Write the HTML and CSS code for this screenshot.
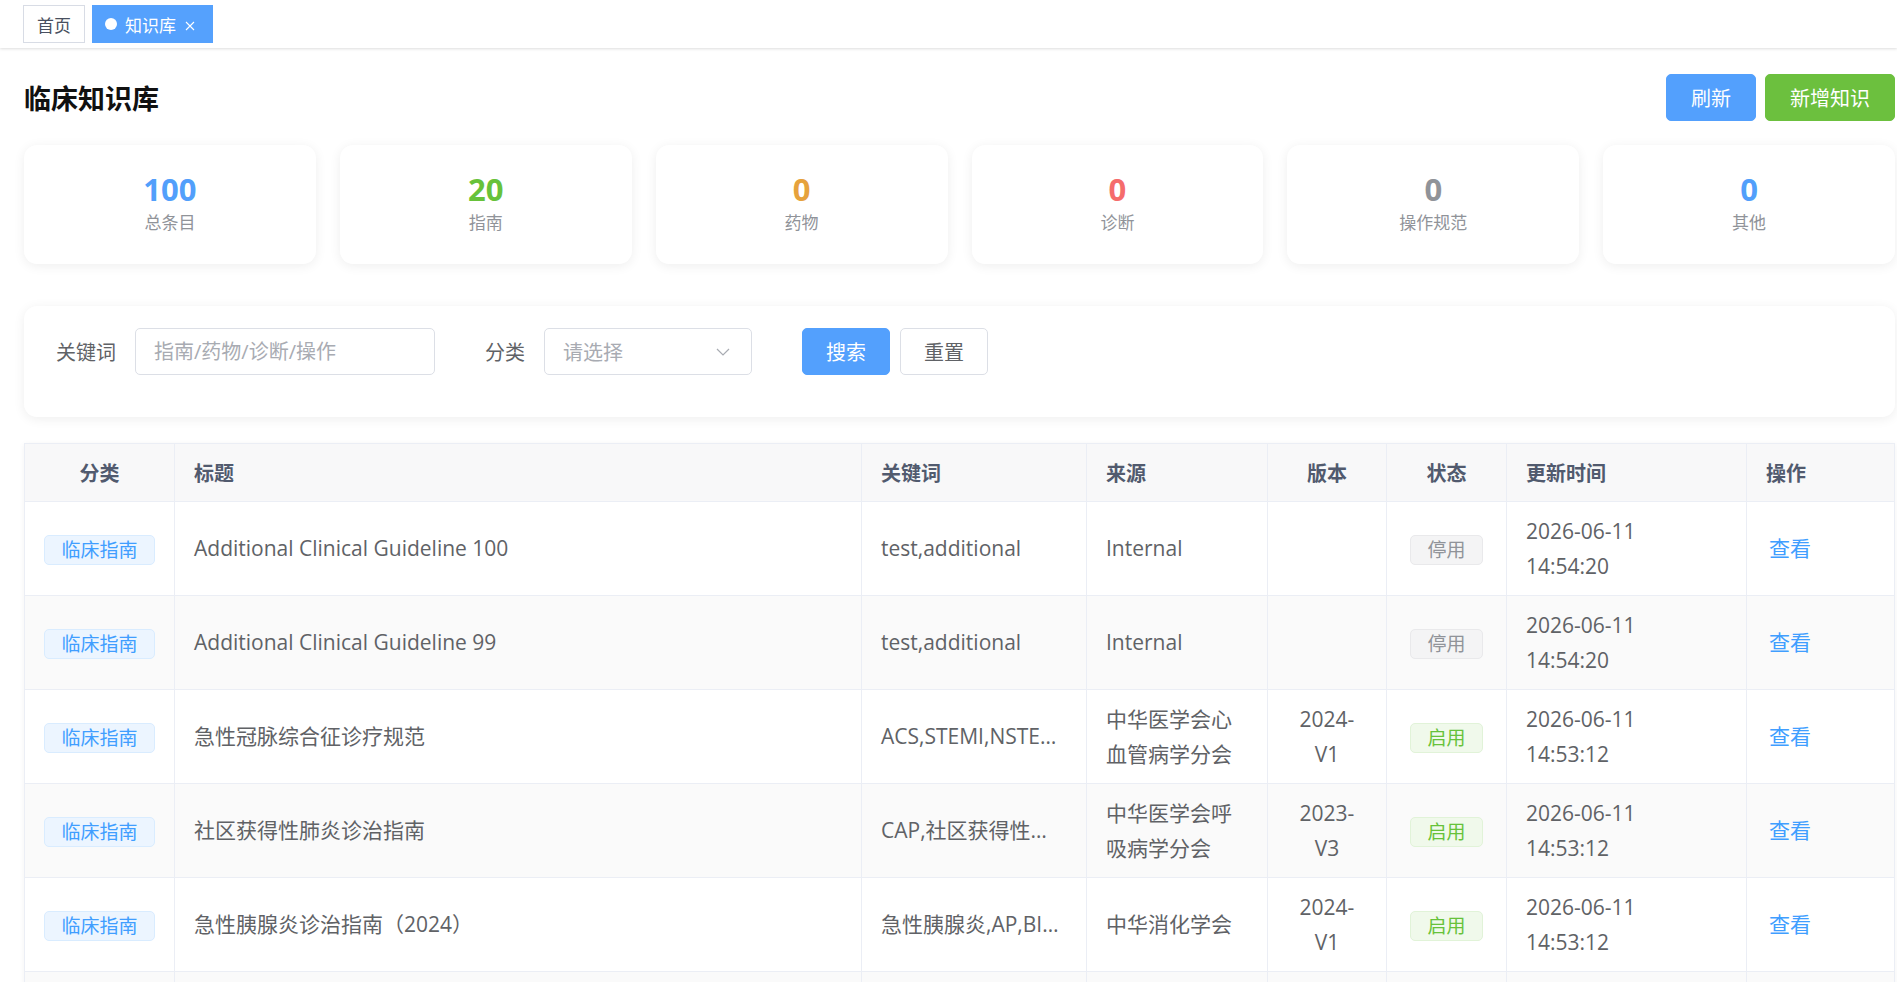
FILE: index.html
```html
<!DOCTYPE html>
<html lang="zh-CN">
<head>
    <meta charset="UTF-8">
    <meta name="viewport" content="width=device-width, initial-scale=1.0">
    <title>临床知识库</title>
    <link rel="stylesheet" href="styles.css">
</head>
<body>

<div class="tags-view">
    <span class="tags-item">首页</span>
    <span class="tags-item active">
        <i class="tags-dot"></i>知识库
        <svg class="tags-close" width="10" height="10" viewBox="0 0 10 10"><path d="M1 1L9 9M9 1L1 9" stroke="#fff" stroke-width="1.1" fill="none"/></svg>
    </span>
</div>

<div class="app-main">
    <div class="page-head">
        <h2 class="page-title">临床知识库</h2>
        <div class="head-actions">
            <button class="btn btn-primary">刷新</button>
            <button class="btn btn-success">新增知识</button>
        </div>
    </div>

    <div class="stat-row">
        <div class="stat-card"><div class="stat-num c-blue">100</div><div class="stat-label">总条目</div></div>
        <div class="stat-card"><div class="stat-num c-green">20</div><div class="stat-label">指南</div></div>
        <div class="stat-card"><div class="stat-num c-orange">0</div><div class="stat-label">药物</div></div>
        <div class="stat-card"><div class="stat-num c-red">0</div><div class="stat-label">诊断</div></div>
        <div class="stat-card"><div class="stat-num c-gray">0</div><div class="stat-label">操作规范</div></div>
        <div class="stat-card"><div class="stat-num c-blue">0</div><div class="stat-label">其他</div></div>
    </div>

    <div class="search-card">
        <div class="form-item">
            <label class="form-label">关键词</label>
            <input class="form-input" type="text" placeholder="指南/药物/诊断/操作">
        </div>
        <div class="form-item">
            <label class="form-label">分类</label>
            <div class="form-select">
                <span class="select-placeholder">请选择</span>
                <svg width="14" height="8" viewBox="0 0 14 8"><path d="M1 1L7 7L13 1" stroke="#a8abb2" stroke-width="1.2" fill="none"/></svg>
            </div>
        </div>
        <div class="form-btns">
            <button class="btn btn-primary">搜索</button>
            <button class="btn btn-default">重置</button>
        </div>
    </div>

    <table class="kb-table">
        <colgroup>
            <col style="width:150px">
            <col style="width:687px">
            <col style="width:225px">
            <col style="width:181px">
            <col style="width:119px">
            <col style="width:120px">
            <col style="width:240px">
            <col>
        </colgroup>
        <thead>
            <tr>
                <th class="center">分类</th>
                <th>标题</th>
                <th>关键词</th>
                <th>来源</th>
                <th class="center">版本</th>
                <th class="center">状态</th>
                <th>更新时间</th>
                <th>操作</th>
            </tr>
        </thead>
        <tbody>
            <tr>
                <td class="center"><span class="el-tag tag-primary">临床指南</span></td>
                <td class="ellipsis">Additional Clinical Guideline 100</td>
                <td class="ellipsis">test,additional</td>
                <td>Internal</td>
                <td class="center ver"></td>
                <td class="center"><span class="el-tag tag-info">停用</span></td>
                <td>2026-06-11<br>14:54:20</td>
                <td class="op"><a class="link">查看</a></td>
            </tr>
            <tr>
                <td class="center"><span class="el-tag tag-primary">临床指南</span></td>
                <td class="ellipsis">Additional Clinical Guideline 99</td>
                <td class="ellipsis">test,additional</td>
                <td>Internal</td>
                <td class="center ver"></td>
                <td class="center"><span class="el-tag tag-info">停用</span></td>
                <td>2026-06-11<br>14:54:20</td>
                <td class="op"><a class="link">查看</a></td>
            </tr>
            <tr>
                <td class="center"><span class="el-tag tag-primary">临床指南</span></td>
                <td class="ellipsis">急性冠脉综合征诊疗规范</td>
                <td class="ellipsis">ACS,STEMI,NSTEMI,胸痛</td>
                <td>中华医学会心血管病学分会</td>
                <td class="center ver">2024-V1</td>
                <td class="center"><span class="el-tag tag-success">启用</span></td>
                <td>2026-06-11<br>14:53:12</td>
                <td class="op"><a class="link">查看</a></td>
            </tr>
            <tr>
                <td class="center"><span class="el-tag tag-primary">临床指南</span></td>
                <td class="ellipsis">社区获得性肺炎诊治指南</td>
                <td class="ellipsis">CAP,社区获得性肺炎,抗菌药物</td>
                <td>中华医学会呼吸病学分会</td>
                <td class="center ver">2023-V3</td>
                <td class="center"><span class="el-tag tag-success">启用</span></td>
                <td>2026-06-11<br>14:53:12</td>
                <td class="op"><a class="link">查看</a></td>
            </tr>
            <tr>
                <td class="center"><span class="el-tag tag-primary">临床指南</span></td>
                <td class="ellipsis">急性胰腺炎诊治指南（2024）</td>
                <td class="ellipsis">急性胰腺炎,AP,BISAP</td>
                <td>中华消化学会</td>
                <td class="center ver">2024-V1</td>
                <td class="center"><span class="el-tag tag-success">启用</span></td>
                <td>2026-06-11<br>14:53:12</td>
                <td class="op"><a class="link">查看</a></td>
            </tr>
            <tr>
                <td class="center"><span class="el-tag tag-primary">临床指南</span></td>
                <td class="ellipsis">2型糖尿病防治指南</td>
                <td class="ellipsis">T2DM,糖尿病,血糖</td>
                <td>中华医学会糖尿病学分会</td>
                <td class="center ver">2024-V2</td>
                <td class="center"><span class="el-tag tag-success">启用</span></td>
                <td>2026-06-11<br>14:53:12</td>
                <td class="op"><a class="link">查看</a></td>
            </tr>
        </tbody>
    </table>
</div>

</body>
</html>
```

FILE: styles.css
```css
body {
    margin: 0;
    font-family: "Open Sans", "Noto Sans CJK SC", sans-serif;
    color: #606266;
    background-color: #fff;
    overflow: hidden;
}

/* tab strip */
.tags-view {
    position: relative;
    z-index: 1;
    height: 48px;
    display: flex;
    align-items: center;
    gap: 7px;
    padding-left: 23px;
    background-color: #fff;
    box-shadow: 0 1px 3px rgba(0, 0, 0, 0.12), 0 0 3px rgba(0, 0, 0, 0.04);
}
.tags-item {
    height: 38px;
    box-sizing: border-box;
    display: flex;
    align-items: center;
    padding: 0 13px;
    border: 1px solid #d8dce5;
    font-size: 17px;
    color: #495060;
    background-color: #fff;
}
.tags-item.active {
    padding: 0 17px 0 12px;
    background-color: #55a1fd;
    border-color: #55a1fd;
    color: #fff;
}
.tags-dot {
    width: 12px;
    height: 12px;
    border-radius: 50%;
    background-color: #fff;
    margin-right: 8px;
}
.tags-close {
    margin: 4px 0 0 9px;
}

.app-main {
    padding: 26px 2px 0 24px;
}

.page-head {
    display: flex;
    justify-content: space-between;
    align-items: center;
    height: 47px;
}
.page-title {
    margin: 0;
    font-size: 27px;
    font-weight: 700;
    color: #111;
}
.head-actions {
    display: flex;
    gap: 9px;
}

.btn {
    height: 47px;
    padding: 0 23px;
    font-family: inherit;
    font-size: 20px;
    border: 1px solid transparent;
    border-radius: 5px;
    cursor: pointer;
}
.head-actions .btn {
    padding: 0 24px;
}
.btn-primary {
    background-color: #53a0fd;
    border-color: #53a0fd;
    color: #fff;
}
.btn-success {
    background-color: #6cc03e;
    border-color: #6cc03e;
    color: #fff;
}
.btn-default {
    background-color: #fff;
    border-color: #dcdfe6;
    color: #606266;
}

/* stats */
.stat-row {
    display: grid;
    grid-template-columns: repeat(6, 1fr);
    gap: 24px;
    margin-top: 24px;
}
.stat-card {
    background-color: #fff;
    border-radius: 13px;
    box-shadow: 0 2px 12px rgba(0, 0, 0, 0.07);
    padding: 24px 0 29px;
    text-align: center;
}
.stat-num {
    font-size: 31px;
    font-weight: 700;
    line-height: 40px;
}
.stat-label {
    margin-top: 2px;
    font-size: 17px;
    line-height: 24px;
    color: #909399;
}
.c-blue { color: #529ffb; }
.c-green { color: #67c23a; }
.c-orange { color: #e6a23c; }
.c-red { color: #f56c6c; }
.c-gray { color: #909399; }

/* search */
.search-card {
    margin-top: 42px;
    display: flex;
    align-items: center;
    padding: 22px 32px 42px;
    background-color: #fff;
    border-radius: 13px;
    box-shadow: 0 2px 12px rgba(0, 0, 0, 0.07);
}
.form-item {
    display: flex;
    align-items: center;
    margin-right: 50px;
}
.form-label {
    margin-right: 19px;
    font-size: 20px;
    color: #606266;
}
.form-input {
    width: 300px;
    height: 47px;
    box-sizing: border-box;
    padding: 0 18px;
    border: 1px solid #dcdfe6;
    border-radius: 5px;
    font-family: inherit;
    font-size: 20px;
    color: #606266;
    outline: none;
}
.form-input::placeholder {
    color: #a8abb2;
}
.form-select {
    width: 208px;
    height: 47px;
    box-sizing: border-box;
    display: flex;
    justify-content: space-between;
    align-items: center;
    padding: 0 21px 0 18px;
    border: 1px solid #dcdfe6;
    border-radius: 5px;
}
.select-placeholder {
    font-size: 20px;
    color: #a8abb2;
}
.form-btns {
    display: flex;
    gap: 10px;
}

/* table */
.kb-table {
    width: 100%;
    margin-top: 26px;
    border-collapse: collapse;
    table-layout: fixed;
    border: 1px solid #ebeef5;
    box-shadow: 0 1px 6px rgba(0, 0, 0, 0.05);
}
.kb-table thead tr {
    height: 58px;
}
.kb-table th {
    padding: 0 19px;
    background-color: #f8f8f9;
    border: 1px solid #ebeef5;
    font-size: 20px;
    font-weight: 700;
    color: #515a6e;
    text-align: left;
}
.kb-table tbody tr {
    height: 94px;
}
.kb-table td {
    padding: 0 19px;
    border: 1px solid #ebeef5;
    font-size: 21px;
    line-height: 35px;
    color: #606266;
    vertical-align: middle;
    background-color: #fff;
}
.kb-table tbody tr:nth-child(even) td {
    background-color: #fafafa;
}
.kb-table .center {
    text-align: center;
}
.kb-table td.ver {
    padding: 0 24px;
}
.kb-table td.op {
    padding-left: 22px;
}
.ellipsis {
    white-space: nowrap;
    overflow: hidden;
    text-overflow: ellipsis;
}

.el-tag {
    display: inline-block;
    height: 30px;
    box-sizing: border-box;
    padding: 0 16px;
    border: 1px solid;
    border-radius: 5px;
    font-size: 19px;
    line-height: 28px;
    vertical-align: middle;
}
.tag-primary {
    background-color: #ecf5ff;
    border-color: #d9ecff;
    color: #409eff;
}
.tag-info {
    background-color: #f4f4f5;
    border-color: #e9e9eb;
    color: #909399;
}
.tag-success {
    background-color: #f0f9eb;
    border-color: #e1f3d8;
    color: #67c23a;
}
.link {
    color: #409eff;
    font-size: 21px;
    cursor: pointer;
}
```
